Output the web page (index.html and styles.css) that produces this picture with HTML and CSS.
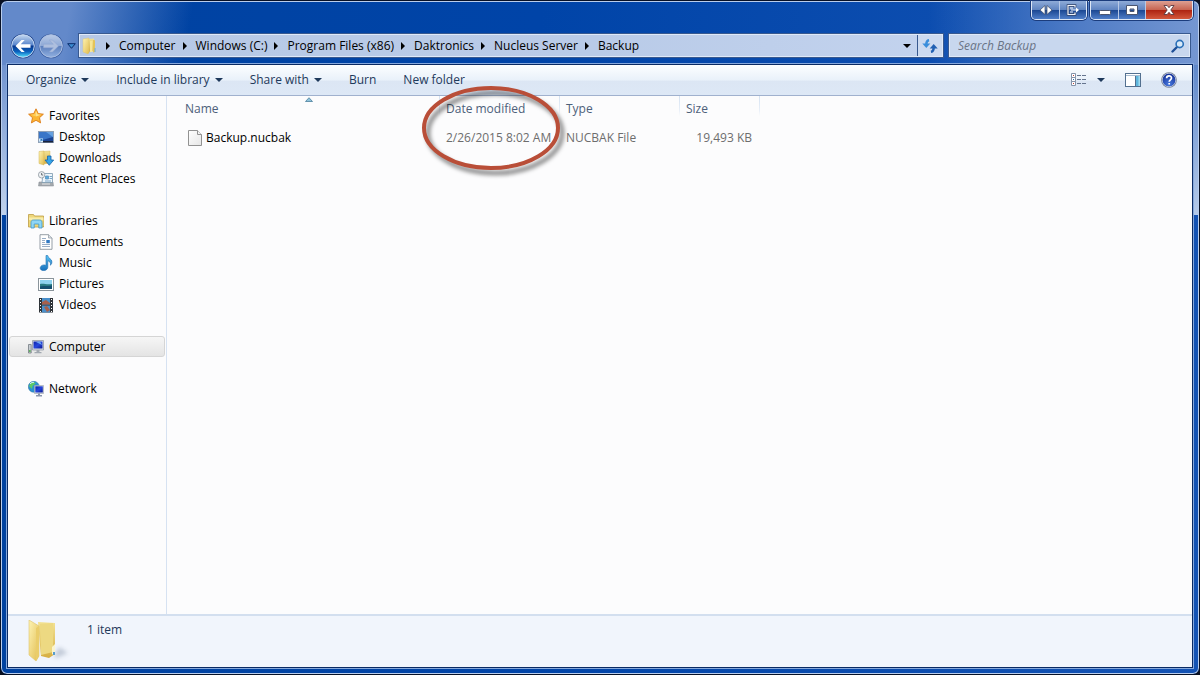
FILE: index.html
```html
<!DOCTYPE html>
<html lang="en">
<head>
<meta charset="utf-8">
<title>Backup</title>
<link rel="stylesheet" href="styles.css">
</head>
<body>
<svg class="defs" width="0" height="0" aria-hidden="true">
  <defs>
    <linearGradient id="gold" x1="0" x2="1" y1="0" y2="1"><stop offset="0" stop-color="#fdf3b4"/><stop offset="1" stop-color="#e2bd50"/></linearGradient>
    <linearGradient id="goldDark" x1="0" x2="0" y1="0" y2="1"><stop offset="0" stop-color="#f3e293"/><stop offset="1" stop-color="#d6ae42"/></linearGradient>
    <linearGradient id="screen" x1="0" x2="1" y1="0" y2="1"><stop offset="0" stop-color="#0a1fa8"/><stop offset=".5" stop-color="#2646dc"/><stop offset="1" stop-color="#0a1890"/></linearGradient>
    <linearGradient id="sky" x1="0" x2="0" y1="0" y2="1"><stop offset="0" stop-color="#5cc4f4"/><stop offset="1" stop-color="#1670bd"/></linearGradient>
    <linearGradient id="orb" x1="0" x2="0" y1="0" y2="1"><stop offset="0" stop-color="#c4d8f0"/><stop offset=".45" stop-color="#5a86cc"/><stop offset=".5" stop-color="#07388f"/><stop offset=".75" stop-color="#0b62be"/><stop offset="1" stop-color="#54e4ff"/></linearGradient>
    <linearGradient id="orbPale" x1="0" x2="0" y1="0" y2="1"><stop offset="0" stop-color="#b9cae6"/><stop offset=".48" stop-color="#8fa9d6"/><stop offset=".52" stop-color="#5c7fbd"/><stop offset="1" stop-color="#91b0e0"/></linearGradient>
    <linearGradient id="paper" x1="0" x2="1" y1="0" y2="1"><stop offset="0" stop-color="#fff"/><stop offset="1" stop-color="#e6e6e6"/></linearGradient>
    <radialGradient id="help" cx=".5" cy=".8" r=".8"><stop offset="0" stop-color="#4778dd"/><stop offset="1" stop-color="#122d94"/></radialGradient>
    <filter id="soft" x="-20%" y="-20%" width="140%" height="150%"><feGaussianBlur stdDeviation="2"/></filter>
  </defs>
</svg>
<div class="window">
  <div class="caption">
    <div class="caption-group">
      <button class="cap" aria-label="Switch monitor"><svg width="14" height="12" viewBox="0 0 14 12"><path d="M6 1.500v9L1 6zM8 1.500v9L13 6z" fill="#fff" stroke="#3c4a66" stroke-width=".7"/></svg></button>
      <button class="cap" aria-label="Move to monitor"><svg width="14" height="12" viewBox="0 0 14 12"><path d="M9 3.500v-2H2v9h7v-2" fill="none" stroke="#34456b" stroke-width="2.600"/><path d="M9 3.500v-2H2v9h7v-2M4 4h3M4 8h3M5 6h6" fill="none" stroke="#eef2fa" stroke-width="1.200"/><path d="M10 3.500L13 6l-3 2.500z" fill="#fff"/></svg></button>
    </div>
    <div class="caption-group">
      <button class="cap" aria-label="Minimize"><svg width="14" height="12" viewBox="0 0 14 12"><rect x="1.500" y="6.500" width="11" height="4" rx="1" fill="#fff" stroke="#4b5670"/></svg></button>
      <button class="cap" aria-label="Maximize"><svg width="14" height="12" viewBox="0 0 14 12"><path fill-rule="evenodd" d="M1.500 1.500h11v9h-11zM5 5v2.500h4V5z" fill="#fff" stroke="#4b5670"/></svg></button>
      <button class="cap cap-close" aria-label="Close"><svg width="14" height="12" viewBox="0 0 14 12"><path d="M2 1.500h3.200L7 3.700l1.800-2.200H12L8.800 6l3.200 4.500H8.800L7 8.300l-1.800 2.200H2L5.200 6z" fill="#fff" stroke="#5b3a42" stroke-width=".9"/></svg></button>
    </div>
  </div>

  <div class="nav">
    <div class="travel">
      <button class="orb" aria-label="Back"><svg width="26" height="26" viewBox="0 0 26 26"><circle cx="13" cy="13" r="12.300" fill="#1d3f85"/><circle cx="13" cy="13" r="11.300" fill="url(#orb)" stroke="#c9dcf5" stroke-width="1"/><path d="M5.500 13l6-6h3.200l-4 4.200h9.800v3.600h-9.800l4 4.200h-3.200z" fill="#fff"/></svg></button>
      <button class="orb" aria-label="Forward"><svg width="26" height="26" viewBox="0 0 26 26"><circle cx="13" cy="13" r="12.300" fill="#385b9f"/><circle cx="13" cy="13" r="11.300" fill="url(#orbPale)" stroke="#aec2e4" stroke-width="1"/><path d="M20.500 13l-6-6h-3.200l4 4.200H5.500v3.600h9.800l-4 4.200h3.200z" fill="#aebfde" stroke="#8ca5d0" stroke-width=".5"/></svg></button>
      <button class="recent" aria-label="Recent pages"><svg width="9" height="6" viewBox="0 0 9 6"><path d="M.7.700h7.600L4.500 5.300z" fill="#3a8bd0" stroke="#0b2c6b"/></svg></button>
    </div>
    <div class="address">
      <svg class="address-icon" width="16" height="18" viewBox="0 0 16 18"><path d="M6 2l6-.5.500 12L6 15z" fill="url(#goldDark)"/><path d="M1 2l6-1v14.500l-1 1.500-5-2z" fill="url(#gold)" stroke="#dcc26a" stroke-width=".4"/><path d="M8 4h2.500v11H8z" fill="#f7e696"/><path d="M11 3l2 .3V15l-2 .5z" fill="#e5c458"/><path d="M12.500 11h1v4h-1z" fill="#70acd7"/></svg>
      <ol class="crumbs">
        <li><a href="#">Computer</a></li>
        <li><a href="#">Windows (C:)</a></li>
        <li><a href="#">Program Files (x86)</a></li>
        <li><a href="#">Daktronics</a></li>
        <li><a href="#">Nucleus Server</a></li>
        <li><a href="#">Backup</a></li>
      </ol>
      <button class="address-drop" aria-label="Previous locations"><span class="tri"></span></button>
      <button class="refresh" aria-label="Refresh"><svg width="16" height="14" viewBox="0 0 16 14"><path d="M7 1C5 1.500 4.300 3 4.300 5.500" fill="none" stroke="#3a8edb" stroke-width="2.400"/><path d="M.3 4.500h8L4.300 9z" fill="#3a8edb"/><path d="M9 13c2-.5 2.700-2 2.700-4.500" fill="none" stroke="#2160b2" stroke-width="2.400"/><path d="M7.700 9.500h8L11.700 5z" fill="#2160b2"/></svg></button>
    </div>
    <label class="search">
      <input type="search" placeholder="Search Backup" aria-label="Search Backup">
      <svg width="14" height="14" viewBox="0 0 14 14"><path d="M6 8L1.500 12.500" stroke="#1f4f96" stroke-width="2.400" stroke-linecap="round"/><circle cx="8.700" cy="5" r="3.600" fill="#d8e9f8" stroke="#2a70b8" stroke-width="1.600"/></svg>
    </label>
  </div>

  <div class="client">
    <div class="toolbar">
      <button class="tool">Organize<span class="tri"></span></button>
      <button class="tool">Include in library<span class="tri"></span></button>
      <button class="tool">Share with<span class="tri"></span></button>
      <button class="tool">Burn</button>
      <button class="tool">New folder</button>
      <div class="tool-icons">
        <button class="view" aria-label="Change your view"><svg width="16" height="14" viewBox="0 0 16 14"><path d="M.5.500h4v4h-4zM.5 4.500h4v4h-4zM.5 8.500h4v4h-4z" fill="#fff" stroke="#8492a8"/><path d="M2 2h1v1H2zM2 10h1v1H2z" fill="#b8433a"/><path d="M2 6h1v1H2z" fill="#2c6fb4"/><path d="M6 2.500h4M11 2.500h4M6 6.500h4M11 6.500h4M6 10.500h4M11 10.500h4" stroke="#66758e"/></svg><span class="tri"></span></button>
        <button aria-label="Show the preview pane"><svg width="16" height="14" viewBox="0 0 16 14"><rect x=".5" y=".5" width="15" height="13" fill="#fff" stroke="#53708f"/><path d="M1 2.500h14" stroke="#a8bccf"/><path d="M10.500 3v10" stroke="#53708f"/><path d="M11 3h4v10h-4z" fill="#5fb6dc"/><path d="M13.500 3h1.500v10h-1.500z" fill="#a3dcf0"/></svg></button>
        <button aria-label="Get help"><svg width="16" height="16" viewBox="0 0 16 16"><circle cx="8" cy="8" r="7.800" fill="#6c7689"/><circle cx="8" cy="8" r="6.800" fill="url(#help)" stroke="#c9d2e6" stroke-width=".8"/><path d="M5.600 6.300C5.600 3.100 10.500 3.200 10.500 6c0 1.800-2.300 1.800-2.300 3.800M8.200 11v1.600" fill="none" stroke="#fff" stroke-width="1.700"/></svg></button>
      </div>
    </div>

    <div class="main">
      <nav class="sidebar">
        <section>
          <a class="node root" href="#"><svg width="16" height="16" viewBox="0 0 16 16"><path d="M8 .8l2.200 4.800 5.200.6-3.900 3.500 1.100 5.200L8 12.300l-4.600 2.600 1.100-5.200L.6 6.200l5.200-.6z" fill="#fbb634" stroke="#dd7a16" stroke-width=".9"/><path d="M8 2.700l1.600 3.600 3.600.4L8 8.500z" fill="#ffe28c"/><path d="M8 2.700L6.400 6.300l-3.600.4L8 8.500z" fill="#ffd05e"/></svg>Favorites</a>
          <a class="node" href="#"><svg width="16" height="16" viewBox="0 0 16 16"><rect x=".5" y="2.500" width="15" height="11" fill="#1b4494" stroke="#8fa0b6"/><path d="M1 3h14v5L1 12z" fill="#3a76c8"/><path d="M8 3h7v5z" fill="#65a0e0"/><path d="M1 12h14v1.500H1z" fill="#17233c"/><rect x="1" y="9.500" width="4" height="4" fill="#d9ecfa"/><path d="M2 12.500l2-2M2.500 10.500H4V12" stroke="#2476bd" fill="none"/></svg>Desktop</a>
          <a class="node" href="#"><svg width="16" height="16" viewBox="0 0 16 16"><path d="M5 1.500l7-.5v12l-7 1z" fill="url(#goldDark)" stroke="#cfad4d" stroke-width=".4"/><path d="M1 1.500L6 1v14L1 13.500z" fill="url(#gold)" stroke="#d3b557" stroke-width=".5"/><path d="M9.500 6h3.500v4h2.700l-4.400 5.300L7 10h2.500z" fill="#35a4e8" stroke="#1763a8" stroke-width=".8"/></svg>Downloads</a>
          <a class="node" href="#"><svg width="16" height="16" viewBox="0 0 16 16"><path d="M1 11h14l.5 4H.5z" fill="#a4a9ae" stroke="#858a90" stroke-width=".5"/><path d="M5 2.500h9.500v9H4z" fill="#eef6fc" stroke="#7b98ad" stroke-width=".8"/><path d="M7.500 5h3v3h-3zM11.500 5.500H14M11.500 7.500H14M7 10h6" fill="#5aa9de" stroke="#5b93bd" stroke-width=".8"/><circle cx="3.600" cy="3.800" r="3.200" fill="#edf1f4" stroke="#8f979e" stroke-width=".8"/><path d="M3.600 2v2h1.600" fill="none" stroke="#4f5960" stroke-width=".8"/><path d="M4 13h8" stroke="#e4e6e8"/></svg>Recent Places</a>
        </section>
        <section>
          <a class="node root" href="#"><svg width="16" height="16" viewBox="0 0 16 16"><path d="M.5 1.500h5l1 1.500h9V14H.5z" fill="#eed77b" stroke="#bd9c45" stroke-width=".8"/><path d="M1 4.500h14.500v3H1z" fill="#f8eca9"/><path d="M1 7h14.500v6H1z" fill="#efd674"/><path d="M3 15V9.500C3 7.800 4 7 5.500 7h6C13 7 14 7.800 14 9.500V15h-3.200v-4H6.200v4z" fill="#8fd6f5" stroke="#4097cb" stroke-width=".8"/></svg>Libraries</a>
          <a class="node" href="#"><svg width="16" height="16" viewBox="0 0 16 16"><path d="M2 .7h8.500L14 4v11.300H2z" fill="#fff" stroke="#8b949d" stroke-width=".9"/><path d="M10.500.7V4H14" fill="#dce4ea" stroke="#8b949d" stroke-width=".7"/><path d="M4 4.500h4M4 6.500h3M4 8.500h3M4 10.500h8M4 12.500h8" stroke="#7f99b8" stroke-width=".8"/><path d="M8.300 6h3.500v3.200H8.300z" fill="#2f78c2"/></svg>Documents</a>
          <a class="node" href="#"><svg width="16" height="16" viewBox="0 0 16 16"><path d="M8 .5h1.700c.3 3 4.300 3.200 4.200 6.400 0 1.500-.6 2.600-1.500 3.300.5-2.700-.6-3.700-2.600-4.400v6.400c-.2 4.500-8 4.200-7.600.7.300-2.500 3.500-3.700 5.800-2.500z" fill="url(#sky)" stroke="#1c6caf" stroke-width=".6"/></svg>Music</a>
          <a class="node" href="#"><svg width="16" height="16" viewBox="0 0 16 16"><rect x=".5" y="2.500" width="15" height="12" fill="#fff" stroke="#8a949b"/><rect x="2" y="4" width="12" height="9" fill="#8ed2ef"/><path d="M2 8c4-1 6 1 12 0v5H2z" fill="#2a7b83"/><path d="M2 10.500c5-1 7 0 12-1V13H2z" fill="#164f70"/></svg>Pictures</a>
          <a class="node" href="#"><svg width="16" height="16" viewBox="0 0 16 16"><path d="M1 1h14v14.500H1z" fill="#2e3338"/><path d="M4 1h8v6.500H4zM4 8.500h8v7H4z" fill="#4a8fca"/><path d="M4 5l4-2 4 3v1.500H4zM6 10l3-1 3 4-3 2z" fill="#a7604c"/><path d="M2.500 2v13M13.500 2v13" stroke="#fff" stroke-width="1" stroke-dasharray="1 2"/></svg>Videos</a>
        </section>
        <section>
          <a class="node root selected" href="#"><svg width="16" height="16" viewBox="0 0 16 16"><path d="M.5 5.500h2.700v8.500H.5z" fill="#c7cdd2" stroke="#737b82" stroke-width=".8"/><path d="M1.200 11h1.300v2H1.200z" fill="#49ae45"/><path d="M4.500 1.500h11v9.500h-11z" fill="#d9dde4" stroke="#9299a4" stroke-width=".8"/><path d="M5.500 2.500h9v7h-9z" fill="url(#screen)"/><path d="M8 3l4-.5 2 3.500z" fill="#6ba5f2"/><path d="M8.500 11h3v2h2v1.300h-7V13h2z" fill="#a1a8b0"/></svg>Computer</a>
        </section>
        <section>
          <a class="node root" href="#"><svg width="16" height="16" viewBox="0 0 16 16"><circle cx="5.800" cy="5.800" r="5.500" fill="#2b92d2" stroke="#276f9b" stroke-width=".5"/><path d="M3 1.500c3-1 4 0 4.500 1L4.500 5 4 8 1 5zM7 6l3-2 1 3-3 4z" fill="#5fca65"/><path d="M2 3c1-1.500 3-2 4-1.500" stroke="#d3f4fa" fill="none"/><path d="M6.500 4.500h9v8h-9z" fill="#dfe3e9" stroke="#959daa" stroke-width=".6"/><path d="M7.300 5.300h7.500v6.200H7.300z" fill="url(#screen)"/><path d="M10 12.500h2v1.500h2v1.500H8V14h2z" fill="#8a96ad"/></svg>Network</a>
        </section>
      </nav>

      <div class="files">
        <table>
          <colgroup><col class="c-name"><col class="c-date"><col class="c-type"><col class="c-size"></colgroup>
          <thead>
            <tr><th scope="col">Name<svg class="sort" width="8" height="5" viewBox="0 0 8 5"><path d="M.5 4.500h7L4 .7z" fill="#8fc3dc" stroke="#4a7f9d" stroke-width=".8"/></svg></th><th scope="col">Date modified</th><th scope="col">Type</th><th scope="col">Size</th></tr>
          </thead>
          <tbody>
            <tr><td><span class="file"><svg width="14" height="16" viewBox="0 0 14 16"><path d="M.5.500h9l4 4v11H.5z" fill="url(#paper)" stroke="#929292"/><path d="M9.500.500v4h4" fill="#f3f3f3" stroke="#929292"/></svg>Backup.nucbak</span></td><td>2/26/2015 8:02 AM</td><td>NUCBAK File</td><td>19,493 KB</td></tr>
          </tbody>
        </table>
        <svg class="mark" width="152" height="98" viewBox="0 0 152 98" aria-hidden="true"><ellipse cx="78" cy="51" rx="67" ry="40" fill="none" stroke="#000" stroke-opacity=".5" stroke-width="4" filter="url(#soft)"/><ellipse cx="74" cy="46" rx="67" ry="40" fill="none" stroke="#b94e38" stroke-width="4"/></svg>
      </div>
    </div>

    <div class="details">
      <svg width="44" height="44" viewBox="0 0 44 44"><path d="M26 36l5-9 9 6-12 5z" fill="#8896ab" opacity=".45" filter="url(#soft)"/><path d="M10 2l17 1v31l-6 4-8-2z" fill="url(#goldDark)"/><path d="M12 4l13-1v29l-12 3z" fill="#edd982"/><path d="M1 0l10 6v30l-3 5-7-6z" fill="url(#gold)" stroke="#dfc56c" stroke-width=".6"/><path d="M8 8l3-2v30l-3 5z" fill="#eacd6a"/><path d="M24 34v-7l3-3v12z" fill="#fbf4cc"/><path d="M25 32h2v3h-2z" fill="#579ecf"/></svg>
      <span>1 item</span>
    </div>
  </div>
</div>
</body>
</html>
```

FILE: styles.css
```css
* { box-sizing: border-box; }

body {
  margin: 0;
  background: #0a1020;
  font: 12px/16px "Open Sans", "Noto Sans", sans-serif;
  color: #000;
}

.defs { position: absolute; }

button {
  margin: 0;
  padding: 0;
  border: 0;
  background: none;
  font: inherit;
  color: inherit;
}

a { color: inherit; text-decoration: none; }
svg { display: block; flex: none; }

.window {
  display: flex;
  flex-direction: column;
  min-height: 100vh;
  padding: 0 6px 6px;
  border: 1px solid #071127;
  border-radius: 7px;
  box-shadow: inset 0 0 0 1px #b9cdec;
  background:
    linear-gradient(100deg, #6389ca 0, #6389ca 70px, rgba(0, 68, 166, 0) 190px) 0 0 / 240px 64px no-repeat,
    linear-gradient(270deg, #7597d2 0, #4f7cc6 120px, rgba(20, 83, 180, 0) 270px) 100% 0 / 270px 64px no-repeat,
    linear-gradient(#7194d0, #c0d2ec) 0 64px / 8px 150px no-repeat,
    linear-gradient(#5f88ca, #b5caea) 100% 64px / 8px 150px no-repeat,
    linear-gradient(90deg, #0042a0, #0044a8 45%, #1453b4);
}

.caption {
  display: flex;
  justify-content: flex-end;
  gap: 3px;
  height: 30px;
}

.caption-group {
  display: flex;
  height: 19px;
  border: 1px solid #dce6f5;
  border-top: 0;
  border-radius: 0 0 5px 5px;
  box-shadow: 0 0 0 1px #1b3c7c;
  overflow: hidden;
}

.cap {
  display: grid;
  place-items: center;
  width: 27px;
  border-left: 1px solid #b8c9e5;
  background: linear-gradient(#8fabd8, #5f84c1 48%, #1c4893 52%, #4f7ec8);
}

.cap:first-child { border-left: 0; }

.cap-close {
  width: 47px;
  background: linear-gradient(#dda093, #c86552 48%, #ae2412 52%, #d3583c);
}

.nav {
  display: flex;
  align-items: center;
  height: 29px;
  padding-right: 3px;
}

.travel {
  display: flex;
  align-items: center;
  width: 72px;
  padding-left: 3px;
}

.orb { margin-right: 2px; }
.recent { margin-left: 1px; }

.address {
  display: flex;
  flex: 1;
  align-items: center;
  height: 23px;
  border: 1px solid #dfe9f8;
  outline: 1px solid #38598f;
  background: linear-gradient(90deg, #b7c9e6, #b9cbe8 60%, #c3d3ee);
}

.address-icon { margin-left: 2px; }

.crumbs {
  display: flex;
  flex: 1;
  margin: 0;
  padding: 0 0 0 8px;
  list-style: none;
}

.crumbs li { display: flex; align-items: center; white-space: nowrap; }

.crumbs li::before {
  content: "";
  margin: 0 9px 0 7px;
  border-left: 4px solid #000;
  border-top: 4px solid transparent;
  border-bottom: 4px solid transparent;
}

.crumbs li:first-child::before { margin-left: 0; }

.tri {
  display: inline-block;
  border-top: 4px solid #1e395b;
  border-left: 4px solid transparent;
  border-right: 4px solid transparent;
}

.address-drop { display: grid; place-items: center; width: 20px; height: 21px; }
.address-drop .tri { border-top-color: #000; }

.refresh {
  display: grid;
  place-items: center;
  width: 25px;
  height: 21px;
  border-left: 1px solid #38598f;
  background: #ccdaf0;
}

.search {
  display: flex;
  align-items: center;
  width: 241px;
  height: 23px;
  margin-left: 6px;
  padding: 0 4px 0 8px;
  border: 1px solid #dfe9f8;
  outline: 1px solid #38598f;
  background: #c8d7ee;
}

.search input {
  flex: 1;
  min-width: 0;
  padding: 0;
  border: 0;
  outline: 0;
  background: none;
  font: inherit;
}

.search input::placeholder { color: #6a7486; font-style: italic; opacity: 1; }

.client {
  display: flex;
  flex: 1;
  flex-direction: column;
  margin-top: 4px;
  border: 1px solid #0a2a63;
  outline: 1px solid #86a8dc;
  background: #fcfcfd;
}

.toolbar {
  display: flex;
  align-items: center;
  gap: 27px;
  height: 31px;
  padding: 0 15px 0 18px;
  border-bottom: 1px solid #a0b1ce;
  background: linear-gradient(#fcfeff, #e9f1fa 50%, #dce6f4 54%, #dde8f6);
  color: #1e395b;
}

.tool { display: flex; align-items: center; gap: 5px; white-space: nowrap; }

.tool-icons { display: flex; align-items: center; gap: 20px; margin-left: auto; }
.view { display: flex; align-items: center; gap: 10px; }

.main { display: flex; flex: 1; }

.sidebar {
  display: flex;
  flex-direction: column;
  gap: 21px;
  width: 159px;
  padding: 9px 1px 0;
  border-right: 1px solid #d6e2f2;
}

.node {
  display: flex;
  align-items: center;
  gap: 5px;
  height: 21px;
  padding-left: 28px;
  border: 1px solid transparent;
  border-radius: 3px;
}

.root { padding-left: 18px; }

.selected {
  border-color: #d5d5d5;
  background: linear-gradient(#f6f6f6, #e4e4e4);
}

.files { position: relative; flex: 1; padding-left: 11px; }

table { table-layout: fixed; width: 582px; border-collapse: collapse; }
.c-name { width: 262px; }
.c-date, .c-type { width: 120px; }
.c-size { width: 80px; }

th {
  position: relative;
  height: 26px;
  padding: 0 6px;
  color: #4c607a;
  font-weight: normal;
  text-align: left;
  background: linear-gradient(#d5e2f1, #e8eff8 70%, #fcfcfd) 100% 0 / 1px 20px no-repeat;
}

th:first-child { padding-left: 7px; }

.sort { position: absolute; top: 1px; left: 50%; margin-left: -4px; }

td { height: 32px; padding: 0 6px; color: #6d6d6d; white-space: nowrap; }
td:first-child { padding-left: 10px; color: #000; }
td:last-child { padding-right: 8px; text-align: right; }
.file { display: flex; align-items: center; gap: 4px; }

.mark { position: absolute; top: -14px; left: 250px; }

.details {
  display: flex;
  height: 53px;
  padding: 4px 20px;
  gap: 15px;
  border-top: 2px solid #d3dfef;
  background: #f1f5fc;
  color: #1e395b;
}

.details span { padding-top: 2px; }
```
